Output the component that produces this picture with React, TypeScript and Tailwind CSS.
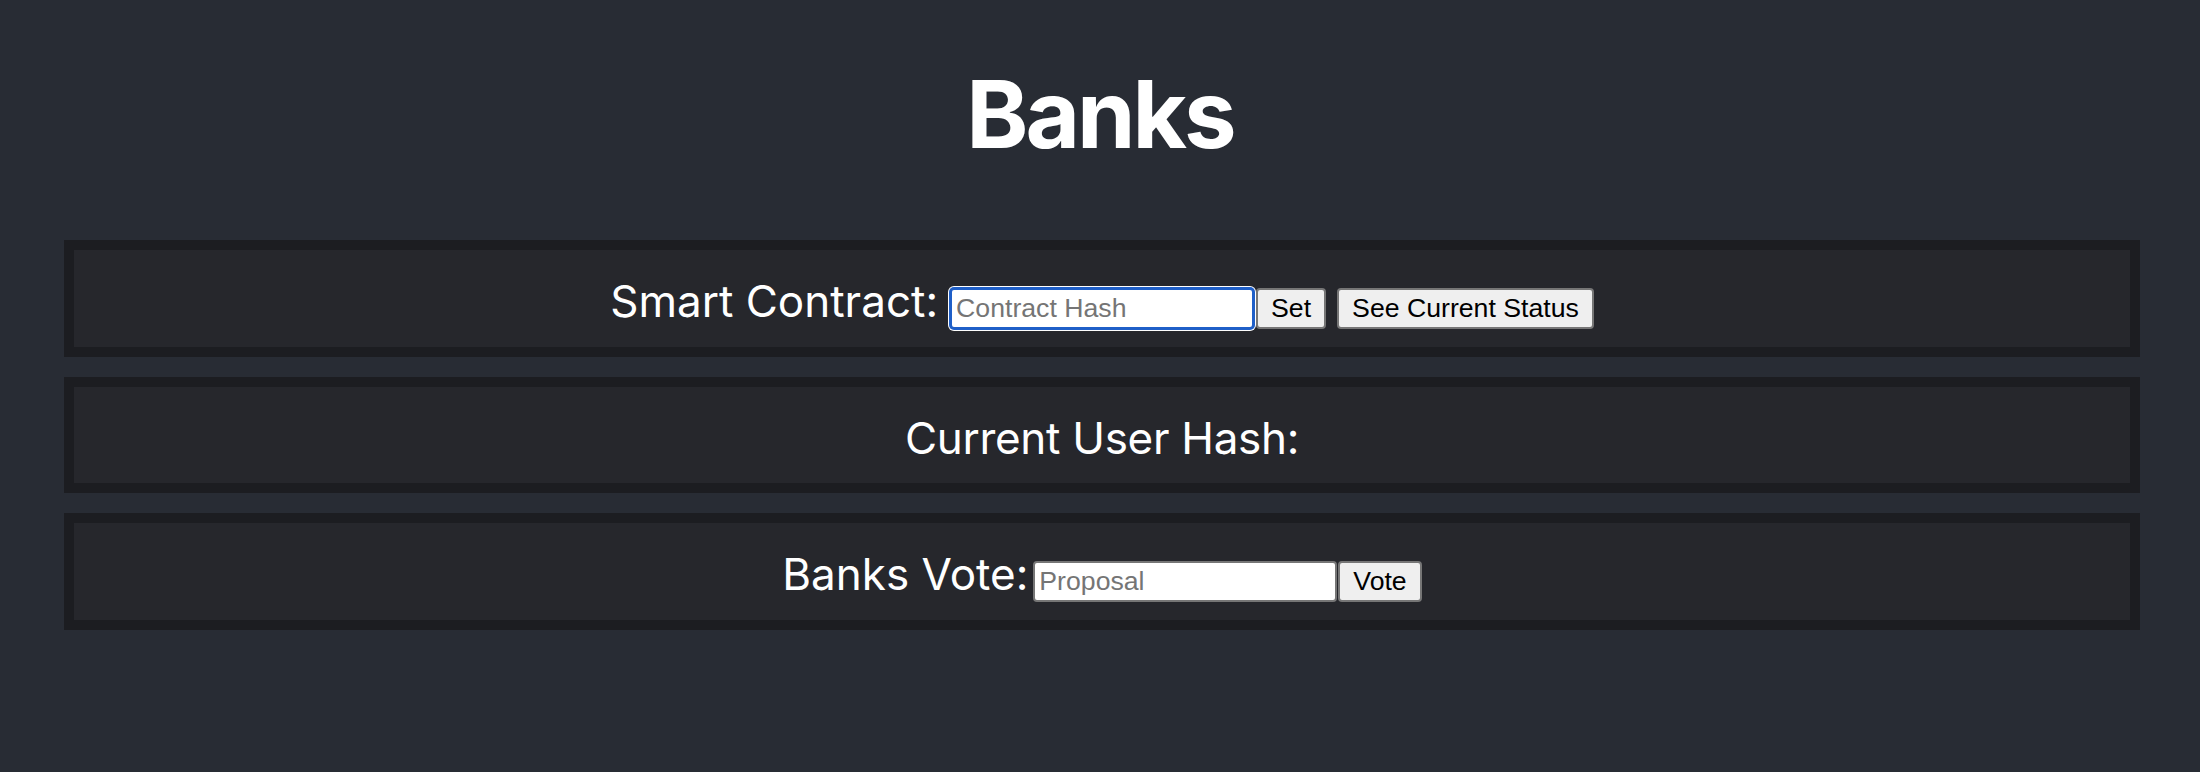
import React from "react";

const labelCls =
  "text-white text-[44px] leading-[53px] font-['Inter','Noto_Sans',sans-serif] whitespace-pre";
const inputCls =
  "w-[304px] h-[41px] bg-white rounded-[4px] px-[4px] text-[26.67px] text-black font-['Liberation_Sans',Arial,sans-serif] placeholder:text-[#757575] outline-none";
const btnCls =
  "h-[41px] px-[13px] bg-[#efefef] border-2 border-[#767676] rounded-[4px] text-[26.67px] text-black leading-none font-['Liberation_Sans',Arial,sans-serif]";

function Box({ children }: { children: React.ReactNode }) {
  return (
    <div className="border-[10px] border-[#1c1d21] bg-[#26272c]">
      <div className="flex justify-center items-baseline pt-[25px] pb-[18px]">
        {children}
      </div>
    </div>
  );
}

export default function App() {
  return (
    <div className="min-h-[772px] bg-[#282c34] font-['Inter','Noto_Sans',sans-serif]">
      <h1 className="pt-[67px] text-center text-white font-bold text-[94px] leading-none tracking-[-3px]">
        Banks
      </h1>
      <div className="mt-[79px] ml-[64px] mr-[60px] flex flex-col gap-[20px]">
        <Box>
          <span className={labelCls}>Smart Contract:</span>
          <input
            className={`${inputCls} ml-[12px] border-2 border-[#1f5fc8] shadow-[0_0_0_1px_#1f5fc8,0_0_0_2px_#ffffff]`}
            placeholder="Contract Hash"
          />
          <button className={`${btnCls} ml-[2px]`}>Set</button>
          <button className={`${btnCls} ml-[11px]`}>See Current Status</button>
        </Box>
        <Box>
          <span className={`${labelCls} tracking-[-0.3px]`}>Current User Hash:</span>
        </Box>
        <Box>
          <span className={labelCls}>Banks Vote:</span>
          <input
            className={`${inputCls} ml-[5px] border-2 border-[#767676]`}
            placeholder="Proposal"
          />
          <button className={`${btnCls} ml-[1px]`}>Vote</button>
        </Box>
      </div>
    </div>
  );
}
